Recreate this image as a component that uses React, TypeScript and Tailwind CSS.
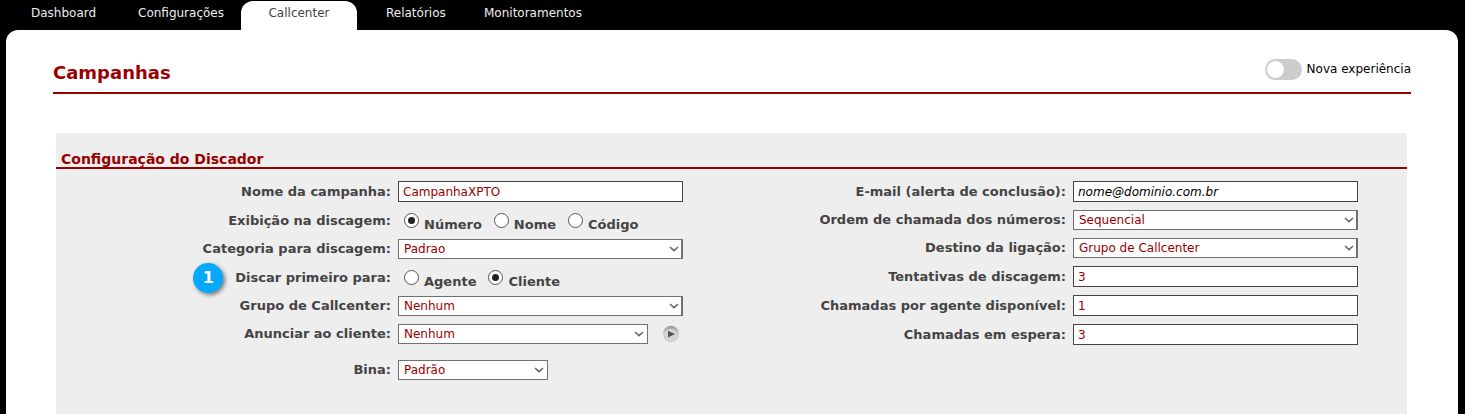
import { useState } from 'react'
import type { ReactNode } from 'react'

const NAV_ITEMS = [
  { label: 'Dashboard', className: 'w-[107px] text-[#eee]' },
  { label: 'Configurações', className: 'w-[103px] text-[#eee]' },
  { label: 'Callcenter', className: 'w-[116px] rounded-t-[12px] bg-white text-center text-[#444]' },
  { label: 'Relatórios', className: 'ml-[29px] w-[98px] text-[#eee]' },
  { label: 'Monitoramentos', className: 'text-[#eee]' },
]

interface RowProps {
  id: string
  label: string
  height?: string
  badge?: string
  children: ReactNode
}

const Row = ({ id, label, height = 'h-[21px]', badge, children }: RowProps) => (
  <div className={`flex items-center gap-[7px] ${height}`}>
    <div className="flex w-[335px] shrink-0 items-center justify-end gap-3">
      {badge && (
        <span className="flex size-[30px] items-center justify-center rounded-full bg-[#03a9ff] text-base font-bold text-white shadow-[2px_2px_4px_rgba(0,0,0,0.5)]">
          {badge}
        </span>
      )}
      <label htmlFor={id} className="whitespace-nowrap font-bold">{label}</label>
    </div>
    {children}
  </div>
)

interface TextFieldProps {
  id: string
  label: string
  initial?: string
  placeholder?: string
}

const TextField = ({ id, label, initial = '', placeholder }: TextFieldProps) => (
  <Row id={id} label={label}>
    <input
      id={id}
      type="text"
      defaultValue={initial}
      placeholder={placeholder}
      className="h-[21px] w-[285px] border border-[#444] bg-white px-1 text-[12px] text-[#900] placeholder:italic placeholder:text-black"
    />
  </Row>
)

interface SelectFieldProps {
  id: string
  label: string
  options: string[]
  width?: string
  children?: ReactNode
}

const SelectField = ({ id, label, options, width = 'w-[285px] border-r-2', children }: SelectFieldProps) => (
  <Row id={id} label={label} height="h-5">
    <div className="relative">
      <select
        id={id}
        className={`block h-5 appearance-none border border-[#707070] bg-white pl-[5px] text-[12px] leading-[18px] text-[#900] ${width}`}
      >
        {options.map(option => <option key={option}>{option}</option>)}
      </select>
      <svg viewBox="0 0 10 6" className="pointer-events-none absolute top-[7px] right-1 h-[6px] w-[10px]" fill="none" stroke="#666" strokeWidth="1.6">
        <path d="M1 1 L5 4.6 L9 1" />
      </svg>
    </div>
    {children}
  </Row>
)

interface RadioFieldProps {
  id: string
  label: string
  options: string[]
  initial: string
  badge?: string
}

const RadioField = ({ id, label, options, initial, badge }: RadioFieldProps) => {
  const [value, setValue] = useState(initial)

  return (
    <Row id={`${id}-${options[0]}`} label={label} badge={badge}>
      <div className="flex items-center gap-3 pl-[6px]">
        {options.map(option => (
          <div key={option} className="flex items-center gap-[5px]">
            <input
              id={`${id}-${option}`}
              type="radio"
              name={id}
              checked={value === option}
              onChange={() => setValue(option)}
              className="flex size-[15px] appearance-none items-center justify-center rounded-full border border-[#555] bg-white before:size-[7px] before:rounded-full checked:before:bg-[#222]"
            />
            <label htmlFor={`${id}-${option}`} className="pt-2 font-bold">{option}</label>
          </div>
        ))}
      </div>
    </Row>
  )
}

const PlayButton = () => (
  <button type="button" aria-label="Ouvir" className="ml-[7px] size-[18px]">
    <svg viewBox="0 0 18 18" className="size-[18px]">
      <defs>
        <linearGradient id="play-ring" x1="0" y1="0" x2="0" y2="1">
          <stop offset="0" stopColor="#999" />
          <stop offset="0.5" stopColor="#d2d2d2" />
          <stop offset="1" stopColor="#c8c8c8" />
        </linearGradient>
      </defs>
      <circle cx="9" cy="9" r="8.2" fill="url(#play-ring)" />
      <ellipse cx="9" cy="10" rx="6.2" ry="6" fill="#d6d6d6" />
      <path d="M6 5.8 L13 9 L6 12.4 Z" fill="#555" />
    </svg>
  </button>
)

const App = () => {
  const [newExperience, setNewExperience] = useState(false)

  return (
    <div className="flex min-h-screen flex-col bg-black font-['DejaVu_Sans',Verdana,sans-serif] text-[13px] leading-4 text-[#444]">
      <nav className="flex h-[30px] pt-px pl-[31px] text-[12px]">
        {NAV_ITEMS.map(item => (
          <a key={item.label} href="#" className={`pt-1 leading-4 ${item.className}`}>{item.label}</a>
        ))}
      </nav>

      <main className="mr-[7px] ml-[6px] flex flex-1 flex-col rounded-t-[12px] bg-white pr-[47px] pl-[47px]">
        <header className="flex h-16 items-center justify-between border-b-2 border-[#900] pt-6">
          <h1 className="text-lg font-bold text-[#900]">Campanhas</h1>
          <div className="mb-2 flex items-center gap-[5px] text-[12px] text-black">
            <input
              id="nova-experiencia"
              type="checkbox"
              role="switch"
              checked={newExperience}
              onChange={() => setNewExperience(!newExperience)}
              className="flex h-[21px] w-[37px] appearance-none items-center rounded-full bg-[#ccc] px-[2px] before:size-[17px] before:rounded-full before:bg-white checked:justify-end checked:bg-[#900]"
            />
            <label htmlFor="nova-experiencia">Nova experiência</label>
          </div>
        </header>

        <section className="mt-[39px] mr-1 ml-[3px] flex-1 bg-[#eee]">
          <h2 className="h-9 border-b-2 border-[#900] pt-[18px] pl-[5px] text-sm leading-4 font-bold text-[#900]">
            Configuração do Discador
          </h2>
          <form className="grid grid-cols-2 pt-3 pr-px">
            <div className="flex flex-col gap-2">
              <TextField id="nome" label="Nome da campanha:" initial="CampanhaXPTO" />
              <RadioField id="exibicao" label="Exibição na discagem:" options={['Número', 'Nome', 'Código']} initial="Número" />
              <SelectField id="categoria" label="Categoria para discagem:" options={['Padrao']} />
              <RadioField id="discar" label="Discar primeiro para:" options={['Agente', 'Cliente']} initial="Cliente" badge="1" />
              <SelectField id="grupo" label="Grupo de Callcenter:" options={['Nenhum']} />
              <SelectField id="anunciar" label="Anunciar ao cliente:" options={['Nenhum']} width="w-[250px]">
                <PlayButton />
              </SelectField>
              <div className="pt-2">
                <SelectField id="bina" label="Bina:" options={['Padrão']} width="w-[150px]" />
              </div>
            </div>
            <div className="flex flex-col gap-2">
              <TextField id="email" label="E-mail (alerta de conclusão):" placeholder="nome@dominio.com.br" />
              <SelectField id="ordem" label="Ordem de chamada dos números:" options={['Sequencial']} />
              <SelectField id="destino" label="Destino da ligação:" options={['Grupo de Callcenter']} />
              <TextField id="tentativas" label="Tentativas de discagem:" initial="3" />
              <TextField id="chamadas" label="Chamadas por agente disponível:" initial="1" />
              <TextField id="espera" label="Chamadas em espera:" initial="3" />
            </div>
          </form>
        </section>
      </main>
    </div>
  )
}

export default App
